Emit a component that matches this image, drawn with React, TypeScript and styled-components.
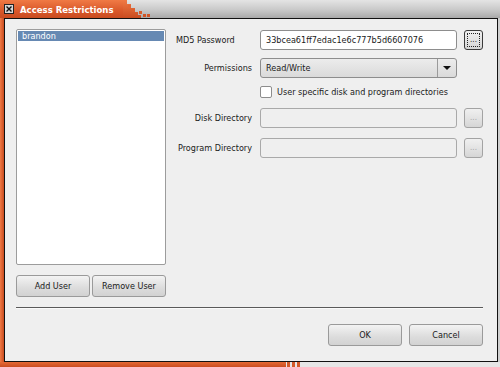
import React, { useState } from "react";
import styled, { createGlobalStyle } from "styled-components";

const GlobalStyle = createGlobalStyle`
  html, body {
    margin: 0;
    padding: 0;
    background: #ffffff;
  }
  body {
    font-family: "DejaVu Sans Condensed", "DejaVu Sans", sans-serif;
    font-stretch: condensed;
    font-size: 9px;
    color: #1a1a1a;
  }
`;

const orange = "linear-gradient(#f07a45, #d9582a 60%, #c94c20)";

const Window = styled.div`
  width: 500px;
  height: 367px;
  display: flex;
  flex-direction: column;
  background: #d6d6d6;
  overflow: hidden;
`;

const TitleBar = styled.div`
  height: 18px;
  display: flex;
  background: linear-gradient(#e4e4e4, #c6c6c6 60%, #a9a9a9);
`;

const TitleTab = styled.div`
  width: 123px;
  display: flex;
  align-items: center;
  gap: 6px;
  padding-left: 4px;
  box-sizing: border-box;
  background: ${orange};
`;

const CloseBox = styled.div`
  width: 10px;
  height: 10px;
  box-sizing: border-box;
  border: 1px solid #222;
  background: #d8d8d8;
  display: flex;
  align-items: center;
  justify-content: center;
`;

const TitleText = styled.span`
  color: #ffffff;
  font-weight: bold;
  font-size: 9.5px;
  white-space: nowrap;
`;

const FrameRow = styled.div`
  flex: 1;
  display: flex;
  min-height: 0;
`;

const SideStrip = styled.div<{ $w: number; $orange?: boolean }>`
  width: ${(p) => p.$w}px;
  flex: none;
  background: ${(p) => (p.$orange ? "linear-gradient(to right, #f07a45, #c94c20)" : "#cfcfcf")};
`;

const Content = styled.div`
  flex: 1;
  min-width: 0;
  border: 1px solid #111;
  background: #efefef;
  padding: 10px 14px 15px 11px;
  display: flex;
  flex-direction: column;
`;

const BottomStrip = styled.div`
  height: 5px;
  display: flex;
  background: #e6e6e6;
`;

const BottomOrange = styled.div`
  width: 286px;
  background: linear-gradient(#e56a36, #c94c20);
`;

const Main = styled.div`
  flex: 1;
  display: flex;
  gap: 10px;
`;

const LeftColumn = styled.div`
  width: 150px;
  flex: none;
  display: flex;
  flex-direction: column;
  gap: 10px;
`;

const UserList = styled.ul`
  margin: 0;
  padding: 1px;
  list-style: none;
  height: 236px;
  box-sizing: border-box;
  background: #ffffff;
  border: 1px solid #9c9c9c;
  border-radius: 2px;
`;

const UserItem = styled.li<{ $selected?: boolean }>`
  height: 10px;
  line-height: 10px;
  padding-left: 4px;
  background: ${(p) => (p.$selected ? "#6689b3" : "transparent")};
  color: ${(p) => (p.$selected ? "#ffffff" : "#1a1a1a")};
`;

const ButtonRow = styled.div`
  display: flex;
  gap: 2px;
`;

const Button = styled.button<{ $w?: number }>`
  width: ${(p) => (p.$w ? `${p.$w}px` : "auto")};
  flex: ${(p) => (p.$w ? "none" : "1")};
  height: 22px;
  padding: 0;
  font: inherit;
  color: #1a1a1a;
  border: 1px solid #9a9a9a;
  border-radius: 3px;
  background: linear-gradient(#f3f3f3, #dcdcdc 60%, #d2d2d2);
`;

const Form = styled.div`
  flex: 1;
  min-width: 0;
  display: grid;
  grid-template-columns: 1fr 197px 19px;
  column-gap: 7px;
  align-content: start;
  align-items: center;
  padding-top: 1px;
`;

const Label = styled.span<{ $top?: number; $left?: boolean }>`
  text-align: ${(p) => (p.$left ? "left" : "right")};
  padding-right: 1px;
  white-space: nowrap;
  margin-top: ${(p) => p.$top ?? 0}px;
`;

const Field = styled.div<{ $disabled?: boolean; $top?: number }>`
  height: 20px;
  box-sizing: border-box;
  margin-top: ${(p) => p.$top ?? 0}px;
  border: 1px solid ${(p) => (p.$disabled ? "#a9a9a9" : "#8d8d8d")};
  border-radius: 3px;
  background: ${(p) => (p.$disabled ? "#efefef" : "#ffffff")};
  padding-left: 5px;
  display: flex;
  align-items: center;
  white-space: nowrap;
  overflow: hidden;
`;

const Combo = styled.div<{ $top?: number }>`
  height: 20px;
  box-sizing: border-box;
  margin-top: ${(p) => p.$top ?? 0}px;
  border: 1px solid #8d8d8d;
  border-radius: 3px;
  background: linear-gradient(#ececec, #dadada);
  display: flex;
  align-items: center;
`;

const ComboText = styled.span`
  flex: 1;
  padding-left: 5px;
`;

const ComboArrow = styled.div`
  width: 18px;
  height: 100%;
  border-left: 1px solid #9a9a9a;
  display: flex;
  align-items: center;
  justify-content: center;
`;

const Browse = styled.button<{ $focused?: boolean; $disabled?: boolean; $top?: number }>`
  width: 19px;
  height: 20px;
  margin-top: ${(p) => p.$top ?? 0}px;
  padding: 0 0 5px;
  box-sizing: border-box;
  font: inherit;
  font-size: 8px;
  line-height: 1;
  color: ${(p) => (p.$disabled ? "#a8a8a8" : "#1a1a1a")};
  border: 1px solid ${(p) => (p.$focused ? "#3a3a3a" : "#a3a3a3")};
  border-radius: 3px;
  background: linear-gradient(#f0f0f0, #d6d6d6);
  position: relative;
  display: flex;
  align-items: flex-end;
  justify-content: center;
`;

const FocusRing = styled.span`
  position: absolute;
  inset: 2px;
  border: 1px dotted #222;
  border-radius: 1px;
`;

const CheckRow = styled.label`
  grid-column: 2 / 4;
  display: flex;
  align-items: center;
  gap: 5px;
  margin-top: 8px;
  white-space: nowrap;
`;

const CheckBox = styled.span`
  width: 12px;
  height: 12px;
  box-sizing: border-box;
  border: 1px solid #8d8d8d;
  border-radius: 2px;
  background: #ffffff;
`;

const Separator = styled.div`
  height: 1px;
  background: #5a5a5a;
  border-bottom: 1px solid #fafafa;
  margin: 9px 0 15px;
`;

const Footer = styled.div`
  display: flex;
  justify-content: flex-end;
  gap: 7px;
`;

const Stairs: React.FC = () => (
  <svg width="28" height="18" viewBox="0 0 28 18" shapeRendering="crispEdges">
    <defs>
      <linearGradient id="og" x1="0" y1="0" x2="0" y2="1">
        <stop offset="0" stopColor="#f07a45" />
        <stop offset="1" stopColor="#c94c20" />
      </linearGradient>
    </defs>
    <polygon points="0,0 4,0 4,4 8,4 8,8 12,8 12,12 15,12 15,15 18,15 18,18 0,18" fill="url(#og)" />
    <rect x="5" y="5" width="3" height="3" fill="#e26634" />
    <rect x="9" y="9" width="3" height="3" fill="#dc5f2e" />
    <rect x="16" y="11" width="3" height="3" fill="#d85b2b" />
    <rect x="20" y="14" width="3" height="3" fill="#d25526" />
    <rect x="24" y="14" width="3" height="3" fill="#d25526" />
  </svg>
);

const BottomStairs: React.FC = () => (
  <svg width="16" height="5" viewBox="0 0 16 5" shapeRendering="crispEdges">
    <rect x="1" y="0" width="3" height="5" fill="#d45a2a" />
    <rect x="6" y="0" width="3" height="5" fill="#d45a2a" />
    <rect x="11" y="0" width="3" height="5" fill="#d45a2a" />
  </svg>
);

const App: React.FC = () => {
  const [users] = useState(["brandon"]);
  const [selected] = useState(0);

  return (
    <>
      <GlobalStyle />
      <Window>
        <TitleBar>
          <TitleTab>
            <CloseBox>
              <svg width="6" height="6" viewBox="0 0 6 6">
                <path d="M0.5 0.5 L5.5 5.5 M5.5 0.5 L0.5 5.5" stroke="#111" strokeWidth="1.4" />
              </svg>
            </CloseBox>
            <TitleText>Access Restrictions</TitleText>
          </TitleTab>
          <Stairs />
        </TitleBar>
        <FrameRow>
          <SideStrip $w={4} $orange />
          <Content>
            <Main>
              <LeftColumn>
                <UserList>
                  {users.map((u, i) => (
                    <UserItem key={u} $selected={i === selected}>
                      {u}
                    </UserItem>
                  ))}
                </UserList>
                <ButtonRow>
                  <Button>Add User</Button>
                  <Button>Remove User</Button>
                </ButtonRow>
              </LeftColumn>
              <Form>
                <Label $left>MD5 Password</Label>
                <Field>33bcea61ff7edac1e6c777b5d6607076</Field>
                <Browse $focused>
                  <FocusRing />
                  ...
                </Browse>

                <Label $top={8}>Permissions</Label>
                <Combo $top={8}>
                  <ComboText>Read/Write</ComboText>
                  <ComboArrow>
                    <svg width="8" height="4" viewBox="0 0 8 4">
                      <polygon points="0,0 8,0 4,4" fill="#111" />
                    </svg>
                  </ComboArrow>
                </Combo>
                <span />

                <span />
                <CheckRow>
                  <CheckBox />
                  User specific disk and program directories
                </CheckRow>

                <Label $top={10}>Disk Directory</Label>
                <Field $disabled $top={10} />
                <Browse $disabled $top={10}>...</Browse>

                <Label $top={10}>Program Directory</Label>
                <Field $disabled $top={10} />
                <Browse $disabled $top={10}>...</Browse>
              </Form>
            </Main>
            <Separator />
            <Footer>
              <Button $w={74}>OK</Button>
              <Button $w={74}>Cancel</Button>
            </Footer>
          </Content>
          <SideStrip $w={2} />
        </FrameRow>
        <BottomStrip>
          <BottomOrange />
          <BottomStairs />
        </BottomStrip>
      </Window>
    </>
  );
};

export default App;
